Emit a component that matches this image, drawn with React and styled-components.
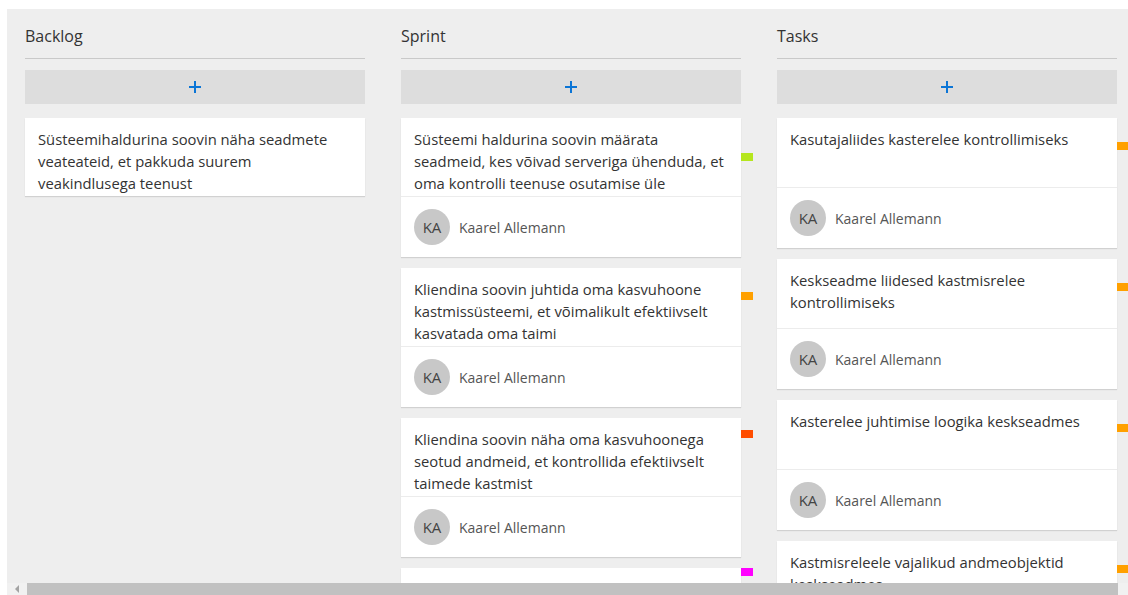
import React from 'react';
import styled, { createGlobalStyle } from 'styled-components';

const GlobalStyle = createGlobalStyle`
  html, body {
    margin: 0;
    background: #ffffff;
  }
  body {
    font-family: "Open Sans", "Noto Sans", sans-serif;
    color: #333333;
  }
`;

const Page = styled.div`
  padding: 9px 0 0 7px;
  height: 595px;
  box-sizing: border-box;
  overflow: hidden;
`;

const Board = styled.div`
  height: 586px;
  background: #eeeeee;
  display: flex;
  flex-direction: column;
  overflow: hidden;
`;

// lanes row, clipped by the scrollbar below
const Lanes = styled.div`
  flex: 1;
  min-height: 0;
  display: flex;
  gap: 36px;
  padding: 0 18px;
  overflow: hidden;
`;

const Column = styled.section`
  flex: 0 0 340px;
  display: flex;
  flex-direction: column;
  & > * {
    flex-shrink: 0;
  }
`;

const ColumnTitle = styled.h2`
  margin: 0;
  padding: 16px 0 11px;
  font-size: 16px;
  font-weight: normal;
  line-height: 22px;
  color: #333333;
  border-bottom: 1px solid #c9c9c9;
`;

const AddButton = styled.button`
  margin-top: 11px;
  height: 34px;
  border: none;
  background: #dddddd;
  display: flex;
  align-items: center;
  justify-content: center;
  padding: 0;
  cursor: pointer;
`;

const CardList = styled.div`
  margin-top: 14px;
  display: flex;
  flex-direction: column;
  gap: 11px;
`;

const Card = styled.article`
  position: relative;
  background: #ffffff;
  box-shadow: 0 1px 1px rgba(0, 0, 0, 0.12);
`;

const CardText = styled.div`
  padding: 10px 12px 2px 13px;
  min-height: 69px;
  box-sizing: border-box;
  font-size: 14.8px;
  line-height: 22px;
  color: #333333;
`;

const Line = styled.div`
  white-space: nowrap;
`;

const CardFooter = styled.div`
  border-top: 1px solid #ececec;
  padding: 12px 13px;
  display: flex;
  align-items: center;
  gap: 9px;
`;

const Avatar = styled.div`
  width: 36px;
  height: 36px;
  border-radius: 50%;
  background: #c8c8c8;
  color: #444444;
  font-size: 15px;
  display: flex;
  align-items: center;
  justify-content: center;
`;

const Assignee = styled.span`
  font-size: 14px;
  color: #555555;
`;

// priority flag sticking out of the card's right edge
const Priority = styled.span`
  position: absolute;
  left: 100%;
  top: ${p => p.$top}px;
  width: 12px;
  height: 8px;
  background: ${p => p.$color};
`;

const Scrollbar = styled.div`
  flex: 0 0 12px;
  display: flex;
  background: #f1f1f1;
`;

const ScrollArrow = styled.div`
  flex: 0 0 20px;
  display: flex;
  align-items: center;
  justify-content: center;
  &::before {
    content: '';
    border-style: solid;
    border-width: 4px 4px 4px 0;
    border-color: transparent #a3a3a3 transparent transparent;
  }
`;

const ScrollThumb = styled.div`
  flex: 0 0 1091px;
  background: #c1c1c1;
`;

const PlusIcon = () => (
  <svg width="14" height="14" viewBox="0 0 14 14">
    <path d="M7 1v12M1 7h12" stroke="#0b75d6" strokeWidth="2" fill="none" />
  </svg>
);

const ORANGE = '#ffa000';

const columns = [
  {
    title: 'Backlog',
    cards: [
      {
        lines: [
          'Süsteemihaldurina soovin näha seadmete',
          'veateateid, et pakkuda suurem',
          'veakindlusega teenust',
        ],
      },
    ],
  },
  {
    title: 'Sprint',
    cards: [
      {
        lines: [
          'Süsteemi haldurina soovin määrata',
          'seadmeid, kes võivad serveriga ühenduda, et',
          'oma kontrolli teenuse osutamise üle',
        ],
        owner: 'Kaarel Allemann',
        flag: { color: '#b5e61d', top: 35 },
      },
      {
        lines: [
          'Kliendina soovin juhtida oma kasvuhoone',
          'kastmissüsteemi, et võimalikult efektiivselt',
          'kasvatada oma taimi',
        ],
        owner: 'Kaarel Allemann',
        flag: { color: ORANGE, top: 24 },
      },
      {
        lines: [
          'Kliendina soovin näha oma kasvuhoonega',
          'seotud andmeid, et kontrollida efektiivselt',
          'taimede kastmist',
        ],
        owner: 'Kaarel Allemann',
        flag: { color: '#ff4d00', top: 12 },
      },
      {
        lines: [],
        owner: 'Kaarel Allemann',
        flag: { color: '#ff00ff', top: 0 },
      },
    ],
  },
  {
    title: 'Tasks',
    cards: [
      {
        lines: ['Kasutajaliides kasterelee kontrollimiseks'],
        owner: 'Kaarel Allemann',
        flag: { color: ORANGE, top: 24 },
      },
      {
        lines: ['Keskseadme liidesed kastmisrelee', 'kontrollimiseks'],
        owner: 'Kaarel Allemann',
        flag: { color: ORANGE, top: 24 },
      },
      {
        lines: ['Kasterelee juhtimise loogika keskseadmes'],
        owner: 'Kaarel Allemann',
        flag: { color: ORANGE, top: 24 },
      },
      {
        lines: ['Kastmisreleele vajalikud andmeobjektid', 'keskseadmes'],
        owner: 'Kaarel Allemann',
        flag: { color: ORANGE, top: 24 },
      },
    ],
  },
];

const initials = name =>
  name
    .split(' ')
    .map(part => part[0])
    .join('');

const StoryCard = ({ lines, owner, flag }) => (
  <Card>
    <CardText>
      {lines.map(line => (
        <Line key={line}>{line}</Line>
      ))}
    </CardText>
    {owner && (
      <CardFooter>
        <Avatar>{initials(owner)}</Avatar>
        <Assignee>{owner}</Assignee>
      </CardFooter>
    )}
    {flag && <Priority $color={flag.color} $top={flag.top} />}
  </Card>
);

const App = () => (
  <Page>
    <GlobalStyle />
    <Board>
      <Lanes>
        {columns.map(col => (
          <Column key={col.title}>
            <ColumnTitle>{col.title}</ColumnTitle>
            <AddButton aria-label="Lisa kaart">
              <PlusIcon />
            </AddButton>
            <CardList>
              {col.cards.map((card, i) => (
                <StoryCard key={i} {...card} />
              ))}
            </CardList>
          </Column>
        ))}
      </Lanes>
      <Scrollbar>
        <ScrollArrow />
        <ScrollThumb />
      </Scrollbar>
    </Board>
  </Page>
);

export default App;
